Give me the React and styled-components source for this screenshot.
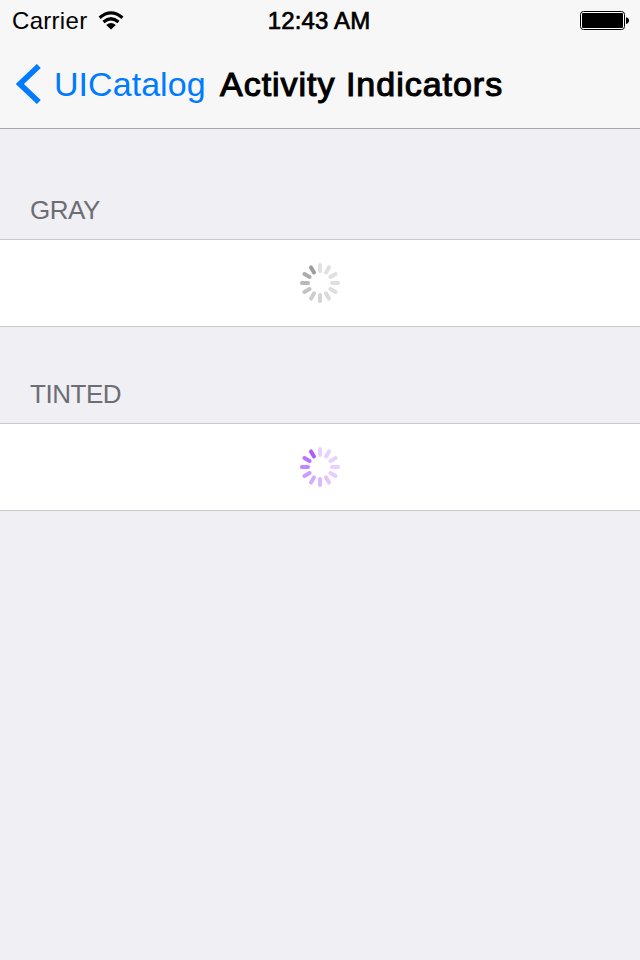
import React from "react";
import styled, { createGlobalStyle } from "styled-components";

const GlobalStyle = createGlobalStyle`
  body {
    margin: 0;
    background: #efeff4;
    font-family: "Liberation Sans", Arial, sans-serif;
  }
`;

const Screen = styled.main`
  width: 640px;
  height: 960px;
  overflow: hidden;
  background: #efeff4;
`;

const Header = styled.header`
  height: 128px;
  background: #f7f7f7;
  border-bottom: 1px solid #a7a7aa;
`;

const StatusBar = styled.div`
  display: grid;
  grid-template-columns: 1fr auto 1fr;
  align-items: center;
  height: 40px;
  padding: 0 11px 0 12px;
  color: #000;
`;

const Carrier = styled.div`
  display: flex;
  align-items: center;
  gap: 11px;
  font-size: 24px;
  line-height: 28px;
  padding-top: 2px;
  letter-spacing: 0.3px;
`;

const Clock = styled.div`
  font-size: 24px;
  line-height: 28px;
  padding: 2px 3px 0 0;
  letter-spacing: 0.15px;
  -webkit-text-stroke: 0.7px #000;
`;

const BatterySlot = styled.div`
  display: flex;
  justify-content: flex-end;
`;

const NavBar = styled.nav`
  display: flex;
  align-items: center;
  height: 88px;
  padding-left: 16px;
`;

const BackButton = styled.a`
  display: flex;
  align-items: center;
  gap: 13px;
  width: 204px;
  color: #007aff;
  font-size: 34px;
  line-height: 40px;
  white-space: nowrap;
`;

const BackLabel = styled.span`
  letter-spacing: 0.05px;
`;

const Title = styled.h1`
  margin: 0;
  font-size: 34px;
  font-weight: 400;
  line-height: 40px;
  letter-spacing: 0.98px;
  white-space: nowrap;
  -webkit-text-stroke: 1.1px #000;
`;

const SectionHeader = styled.h2`
  box-sizing: border-box;
  height: ${(p) => p.$height}px;
  margin: 0;
  padding: 0 30px 14px;
  display: flex;
  align-items: flex-end;
  color: #6d6d72;
  font-size: 26px;
  font-weight: 400;
  line-height: 30px;
  letter-spacing: -0.45px;
`;

const Cell = styled.div`
  display: flex;
  align-items: center;
  justify-content: center;
  height: 86px;
  background: #fff;
  border-top: 1px solid #c8c7cc;
  border-bottom: 1px solid #c8c7cc;
`;

const Icon = styled.svg`
  display: block;
  flex: none;
`;

const WifiIcon = () => (
  <Icon width="26" height="21" viewBox="0 0 26 21">
    <path d="M1.6 6.7Q13 -2.8 24.4 6.7" fill="none" stroke="#000" strokeWidth="3.2" />
    <path d="M5.5 10.9Q13 4.6 20.5 10.9" fill="none" stroke="#000" strokeWidth="3.2" />
    <path d="M8.2 13.9Q13 10.2 17.8 13.9L13 18.6Z" />
  </Icon>
);

const BatteryIcon = () => (
  <Icon width="49" height="20" viewBox="0 0 49 20">
    <rect x="0.5" y="1.5" width="44" height="18" rx="3" fill="#fff" stroke="#000" />
    <rect x="2" y="3" width="41" height="15" rx="1" />
    <path d="M46 7.2Q49 8 49 10.6T46 14Z" />
  </Icon>
);

const ChevronIcon = () => (
  <Icon width="25" height="40" viewBox="0 0 25 40">
    <path d="M22.8 2L3.9 20L22.8 38" fill="none" stroke="#007aff" strokeWidth="5.6" />
  </Icon>
);

const GRAY_SPOKES = [
  "#e0e0e0", "#e0e0e0", "#e0e0e0", "#e0e0e0", "#dedede", "#dadada",
  "#d4d4d4", "#cdcdcd", "#c4c4c4", "#b8b8b8", "#adadad", "#9c9c9c",
];

const TINTED_SPOKES = [
  "#e8d0ff", "#e8d0ff", "#e8d0ff", "#e8d0ff", "#e6ccff", "#e3c4ff",
  "#dcb8ff", "#d5abff", "#cd9aff", "#c386ff", "#ba75ff", "#ad5cff",
];

const Spinner = ({ spokes, label }) => (
  <Icon width="40" height="40" viewBox="-20 -20 40 40" role="img" aria-label={label}>
    {spokes.map((color, i) => (
      <rect key={i} x="-2" y="-20" width="4" height="10" rx="2" fill={color} transform={`rotate(${i * 30})`} />
    ))}
  </Icon>
);

export default function App() {
  return (
    <Screen>
      <GlobalStyle />
      <Header>
        <StatusBar>
          <Carrier>
            Carrier
            <WifiIcon />
          </Carrier>
          <Clock>12:43 AM</Clock>
          <BatterySlot>
            <BatteryIcon />
          </BatterySlot>
        </StatusBar>
        <NavBar>
          <BackButton>
            <ChevronIcon />
            <BackLabel>UICatalog</BackLabel>
          </BackButton>
          <Title>Activity Indicators</Title>
        </NavBar>
      </Header>
      <SectionHeader $height={110}>GRAY</SectionHeader>
      <Cell>
        <Spinner spokes={GRAY_SPOKES} label="Gray" />
      </Cell>
      <SectionHeader $height={96}>TINTED</SectionHeader>
      <Cell>
        <Spinner spokes={TINTED_SPOKES} label="Tinted" />
      </Cell>
    </Screen>
  );
}
